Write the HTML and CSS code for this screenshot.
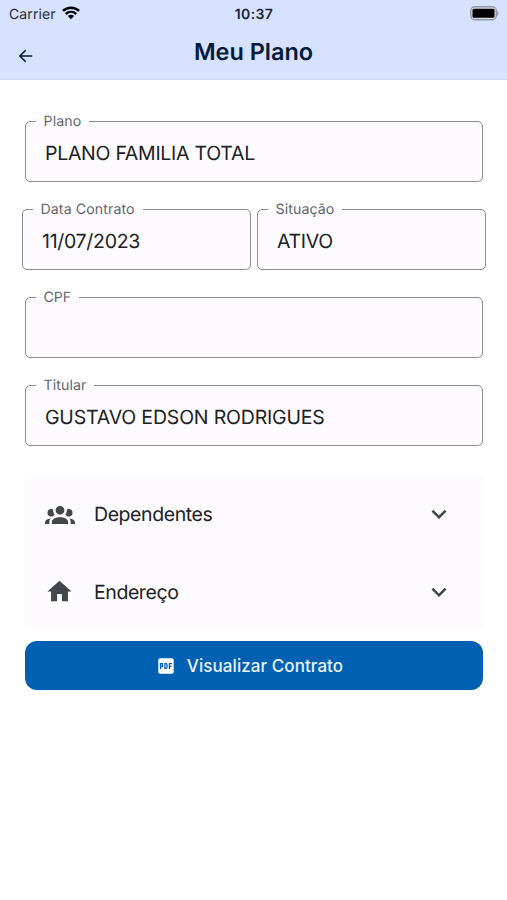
FILE: index.html
```html
<!DOCTYPE html>
<html lang="pt-BR">
<head>
<meta charset="utf-8">
<title>Meu Plano</title>
<link rel="stylesheet" href="styles.css">
</head>
<body>
<header class="top">
  <div class="status">
    <div class="carrier"><span>Carrier</span>
      <svg width="18" height="14" viewBox="0 0 18 14" fill="none" stroke="#000" stroke-width="2.4"><path d="M.9 4.9C5.400.6 12.600.6 17.100 4.900M3.800 8C6.900 5.100 11.100 5.100 14.200 8"/><path d="M5.900 10.100Q9 7.500 12.100 10.100L9 13.300Z" fill="#000" stroke="none"/></svg>
    </div>
    <span class="time">10:37</span>
    <svg class="battery" width="31" height="15" viewBox="0 0 31 15"><rect x="1.800" y=".8" width="25.500" height="13" rx="4" fill="#d8dceb" stroke="#9299aa" stroke-width="1.400"/><rect x="3.500" y="2.800" width="22" height="9" rx="1.500" fill="#000"/><path d="M28.200 4.700Q31 7.300 28.200 9.900Z" fill="#8e95a6"/></svg>
  </div>
  <div class="bar">
    <svg class="back" width="16" height="16" viewBox="0 0 16 16" fill="none" stroke="#0b1c3a" stroke-width="1.600"><path d="M14.300 8H2M7.700 2.200 1.900 8l5.800 5.800"/></svg>
    <h1>Meu Plano</h1>
  </div>
</header>
<main>
  <fieldset class="field plano"><legend>Plano</legend><span>PLANO FAMILIA TOTAL</span></fieldset>
  <div class="pair">
    <fieldset class="field data"><legend>Data Contrato</legend><span>11/07/2023</span></fieldset>
    <fieldset class="field situacao"><legend>Situação</legend><span>ATIVO</span></fieldset>
  </div>
  <fieldset class="field cpf"><legend>CPF</legend><span></span></fieldset>
  <fieldset class="field titular"><legend>Titular</legend><span>GUSTAVO EDSON RODRIGUES</span></fieldset>
  <section class="panel">
    <div class="item">
      <svg class="lead" width="30" height="30" viewBox="0 0 24 24" fill="#42474e"><path d="M12 5.500A3.500 3.500 0 0 1 15.500 9 3.500 3.500 0 0 1 12 12.500 3.500 3.500 0 0 1 8.500 9 3.500 3.500 0 0 1 12 5.500M5 8C5.560 8 6.080 8.150 6.530 8.420 6.380 9.850 6.800 11.270 7.660 12.380 7.160 13.340 6.160 14 5 14A3 3 0 0 1 2 11 3 3 0 0 1 5 8M19 8A3 3 0 0 1 22 11 3 3 0 0 1 19 14C17.840 14 16.840 13.340 16.340 12.380 17.200 11.270 17.620 9.850 17.470 8.420 17.920 8.150 18.440 8 19 8M5.500 18.250C5.500 16.180 8.410 14.500 12 14.500S18.500 16.180 18.500 18.250V20H5.500V18.250M0 20V18.500C0 17.110 1.890 15.940 4.450 15.600 3.860 16.280 3.500 17.220 3.500 18.250V20H0M24 20H20.500V18.250C20.500 17.220 20.140 16.280 19.550 15.600 22.110 15.940 24 17.110 24 18.500V20Z"/></svg>
      <span>Dependentes</span>
      <svg width="30" height="30" viewBox="0 0 24 24" fill="#42474e"><path d="M7.410 8.580 12 13.170l4.590-4.590L18 10l-6 6-6-6z"/></svg>
    </div>
    <div class="item">
      <svg class="lead" width="29" height="29" viewBox="0 0 24 24" fill="#42474e"><path d="M10 20v-6h4v6h5v-8h3L12 3 2 12h3v8z"/></svg>
      <span>Endereço</span>
      <svg width="30" height="30" viewBox="0 0 24 24" fill="#42474e"><path d="M7.410 8.580 12 13.170l4.590-4.590L18 10l-6 6-6-6z"/></svg>
    </div>
  </section>
  <button class="cta">
    <svg width="16" height="16" viewBox="0 0 16 16"><rect x=".3" y=".3" width="15.400" height="15.400" rx="1.800" fill="#fff"/><path d="M2.500 11V5.700H4.400V8.600H2.500M6.900 5.700V10.400H8Q9.100 10.400 9.100 8T8 5.700ZM11.400 11V5.700H14M11.400 8.300H13.500" fill="none" stroke="#0061b2" stroke-width="1.250"/></svg>
    <span>Visualizar Contrato</span>
  </button>
</main>
</body>
</html>
```
FILE: styles.css
```css
* { box-sizing: border-box; }
body {
  margin: 0;
  background: #fff;
  font-family: Inter, "Liberation Sans", sans-serif;
  color: #202124;
  text-rendering: geometricPrecision;
}
.top {
  height: 80px;
  background: #d6e2ff;
  border-bottom: 1px solid #cbdce8;
}
.status {
  height: 28px;
  padding: 0 7px 0 9px;
  display: grid;
  grid-template-columns: 1fr auto 1fr;
  align-items: center;
  font-size: 14px;
}
.carrier { display: flex; align-items: center; gap: 6px; color: #262c38; letter-spacing: .1px; }
.carrier svg { margin-top: -2px; }
.time { font-weight: 600; font-size: 14px; color: #1c2433; letter-spacing: .4px; margin-right: 1px; }
.battery { justify-self: end; margin-top: -2px; }
.bar {
  height: 51px;
  display: grid;
  grid-template-columns: 1fr auto 1fr;
  align-items: center;
  padding: 0 18px;
}
.back { margin-top: 4px; }
h1 {
  margin: -3px 0 0;
  font-size: 23.500px;
  line-height: 30px;
  font-weight: 600;
  letter-spacing: -.02px;
  color: #041b3d;
}
main {
  padding: 31px 24px 0 25px;
  display: flex;
  flex-direction: column;
}
.field {
  margin: 0 0 17px;
  min-width: 0;
  height: 71px;
  padding: 0 0 0 10px;
  border: 1.300px solid #8b8d92;
  border-radius: 5px;
  background: #fdfbff;
}
.field legend {
  padding: 1px 8px 0 7.500px;
  height: 20px;
  font-size: 14.200px;
  line-height: 20px;
  letter-spacing: .08px;
  color: #64676d;
}
.field.cpf legend { letter-spacing: -.1px; }
.field span {
  display: block;
  padding: 8px 0 0 9px;
  font-size: 19.500px;
  line-height: 28px;
  white-space: nowrap;
}
.plano span { letter-spacing: -.27px; }
.data span, .situacao span { letter-spacing: -.3px; }
.titular span { letter-spacing: -.18px; }
.pair {
  display: grid;
  grid-template-columns: 1fr 1fr;
  gap: 6px;
  margin: 0 -3px;
}
.panel {
  margin-top: 13px;
  height: 153px;
  padding: 0 29px 0 20px;
  background: #fdfbff;
}
.item {
  height: 78px;
  display: grid;
  grid-template-columns: 49px 1fr 30px;
  align-items: center;
  font-size: 19.500px;
  letter-spacing: -.42px;
}
.item:first-child { height: 76px; }
.item:last-child { height: 79px; }
.lead { justify-self: start; }
.cta {
  margin-top: 12px;
  height: 49px;
  padding: 0 7px 0 0;
  border: 0;
  border-radius: 12px;
  background: #0061b2;
  color: #e9f3ff;
  display: flex;
  align-items: center;
  justify-content: center;
  gap: 13px;
  font: 500 17px Inter, "Liberation Sans", sans-serif;
  letter-spacing: .07px;
}
```
